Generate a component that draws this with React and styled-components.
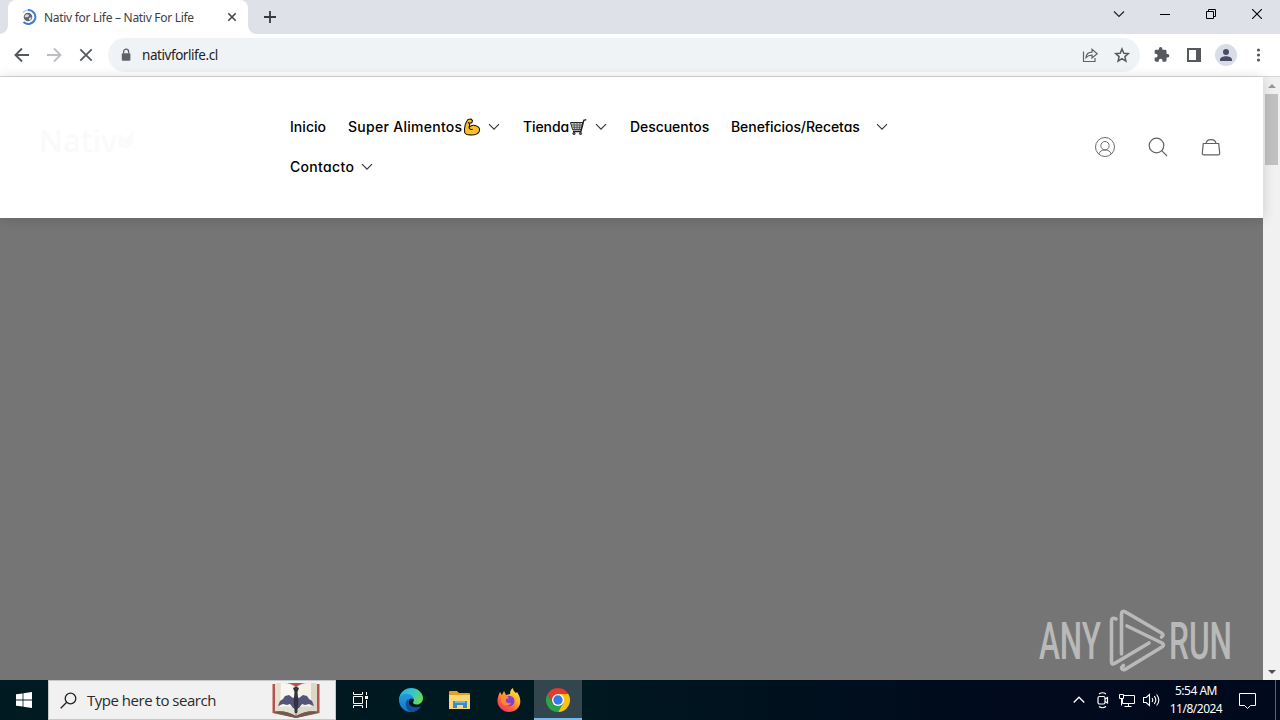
import React from "react";
import styled, { createGlobalStyle } from "styled-components";

const GlobalStyle = createGlobalStyle`
  * {
    box-sizing: border-box;
  }
  body {
    margin: 0;
    overflow: hidden;
    font-family: "Noto Sans", "Open Sans", sans-serif;
  }
  svg {
    display: block;
    flex: none;
  }
`;

const Screen = styled.div`
  display: flex;
  flex-direction: column;
  width: 1280px;
  height: 720px;
  overflow: hidden;
  background: #fff;
`;

/* browser window */
const TabStrip = styled.div`
  display: flex;
  height: 34px;
  flex: none;
  padding-left: 8px;
  background: #dee1e8;
`;
const Tab = styled.div`
  position: relative;
  display: flex;
  align-items: center;
  width: 240px;
  height: 34px;
  padding: 0 10px 0 13px;
  background: #fff;
  border-radius: 8px 8px 0 0;
  &::before,
  &::after {
    content: "";
    position: absolute;
    bottom: 0;
    width: 8px;
    height: 8px;
  }
  &::before {
    left: -8px;
    background: radial-gradient(circle at 0 0, transparent 7.5px, #fff 8px);
  }
  &::after {
    right: -8px;
    background: radial-gradient(circle at 100% 0, transparent 7.5px, #fff 8px);
  }
`;
const TabTitle = styled.span`
  flex: 1;
  margin-left: 7px;
  color: #3c4043;
  font-size: 12px;
  letter-spacing: -0.29px;
  white-space: nowrap;
`;
const NewTab = styled.div`
  display: flex;
  align-items: center;
  margin-left: 16px;
`;
const WindowButtons = styled.div`
  display: flex;
  margin-left: auto;
`;
const WindowButton = styled.div`
  display: flex;
  align-items: center;
  justify-content: center;
  width: 46px;
  height: 28px;
`;
const Toolbar = styled.div`
  display: flex;
  align-items: center;
  height: 43px;
  flex: none;
  padding-left: 12px;
  border-bottom: 1px solid #d5d7da;
`;
const NavIcons = styled.div`
  display: flex;
  gap: 12px;
`;
const AddressBar = styled.div`
  display: flex;
  align-items: center;
  width: 1032px;
  height: 34px;
  margin-left: 12px;
  padding: 0 8px 0 10px;
  background: #f0f3f5;
  border-radius: 17px;
`;
const Url = styled.span`
  flex: 1;
  margin-left: 8px;
  color: #202124;
  font-size: 13.5px;
  letter-spacing: -0.44px;
`;
const AddressActions = styled.div`
  display: flex;
  gap: 12px;
`;
const ToolbarActions = styled.div`
  display: flex;
  gap: 12px;
  margin-left: 12px;
`;
const Avatar = styled.div`
  display: flex;
  width: 22px;
  height: 22px;
  margin: -1px;
  align-items: center;
  justify-content: center;
  border-radius: 50%;
  background: #dadde8;
`;

/* web page */
const Viewport = styled.div`
  display: flex;
  height: 603px;
  flex: none;
`;
const Page = styled.div`
  position: relative;
  width: 1263px;
  background: #757575;
`;
const SiteHeader = styled.header`
  display: flex;
  align-items: center;
  height: 141px;
  padding: 0 41px 2px 39px;
  background: #fff;
  box-shadow: 0 1px 12px rgba(0, 0, 0, 0.16);
`;
const Logo = styled.div`
  display: flex;
  align-items: center;
  width: 251px;
  padding-bottom: 14px;
  color: #fafafa;
  font-size: 31px;
  font-weight: 500;
  letter-spacing: 0;
`;
const Menu = styled.nav`
  display: flex;
  flex-wrap: wrap;
  width: 640px;
  height: 80px;
  font-family: Inter, "Noto Sans", sans-serif;
  font-size: 14px;
  font-weight: 500;
  font-feature-settings: "cv11", "ss03";
  color: #000;
`;
const MenuItem = styled.div`
  display: flex;
  align-items: center;
  width: ${(props) => props.$width}px;
  height: 40px;
  white-space: nowrap;
`;
const MenuLabel = styled.span`
  width: ${(props) => props.$width}px;
  letter-spacing: ${(props) => props.$spacing}px;
`;
const MenuArrow = styled.span`
  margin-left: ${(props) => props.$gap}px;
`;
const HeaderIcons = styled.div`
  display: flex;
  gap: 31px;
  margin-left: auto;
`;
const Scrollbar = styled.div`
  display: flex;
  flex-direction: column;
  align-items: center;
  width: 17px;
  background: #f1f1f1;
`;
const ScrollThumb = styled.div`
  width: 13px;
  height: 71px;
  background: #c1c1c1;
`;
const ScrollButton = styled.div`
  display: flex;
  align-items: center;
  justify-content: center;
  width: 17px;
  height: 17px;
  margin-top: ${(props) => (props.$end ? "auto" : 0)};
`;
const Watermark = styled.div`
  position: absolute;
  right: 25px;
  bottom: 8px;
  display: flex;
  color: #b9b9b9;
`;

/* windows taskbar */
const Taskbar = styled.div`
  display: flex;
  height: 40px;
  flex: none;
  background: linear-gradient(90deg, #001a22 0%, #001820 46%, #000b1c 75%, #000a1c 100%);
`;
const TaskButton = styled.div`
  display: flex;
  align-items: center;
  justify-content: center;
  width: ${(props) => props.$width || 48}px;
  margin-right: ${(props) => props.$gap || 0}px;
  height: 40px;
  background: ${(props) => (props.$active ? "#33464d" : "transparent")};
  box-shadow: ${(props) => (props.$active ? "inset 0 -2px #76b9ed" : "none")};
`;
const SearchBox = styled.div`
  display: flex;
  align-items: center;
  width: 288px;
  height: 40px;
  padding: 0 15px 0 11px;
  background: #f1f1f1;
  border: 1px solid #c4c8ca;
`;
const SearchText = styled.span`
  flex: 1;
  margin-left: 10px;
  color: #2b2b2b;
  font-family: "Open Sans", "Noto Sans", sans-serif;
  font-size: 15px;
  letter-spacing: -0.48px;
`;
const Tray = styled.div`
  display: flex;
  align-items: center;
  margin-left: auto;
  color: #fff;
`;
const TrayIcon = styled.div`
  display: flex;
  justify-content: center;
  width: 24px;
`;
const Clock = styled.div`
  width: 66px;
  font-size: 12px;
  line-height: 18px;
  letter-spacing: -0.5px;
  text-align: center;
`;
const ShowDesktop = styled.div`
  width: 5px;
  height: 40px;
  margin-left: 9px;
  border-left: 1px solid #5a636d;
`;

const ArrowDown = () => (
  <svg width="12" height="8" viewBox="0 0 12 8" fill="none" stroke="#333" strokeWidth="1.100">
    <path d="M1 1.200l5 5 5-5" />
  </svg>
);

const Biceps = () => (
  <svg width="18" height="18" viewBox="0 0 18 18" stroke="#1c1400" strokeWidth="1.100" strokeLinejoin="round">
    <path
      fill="#fdbf2d"
      d="M5 1.500L8 1l1.500 1.600-.6 2-2.100.6-.7 4.600c1-2 4.200-3.400 6.800-2 3.200.7 4.400 3.300 3.300 5.600-1.500 2.700-4.600 3.700-8.400 3.500-3 .1-5.400-.7-6.200-2.500C1.200 9.700 2.500 4.500 5 1.500z"
    />
    <path fill="none" d="M6.200 9.800c.5 1.500 1.900 2 3.500 1.500M4.800 4.600l2 .6" />
  </svg>
);

const Cart = () => (
  <svg width="18" height="18" viewBox="0 0 18 18" fill="none" stroke="#222">
    <path fill="#c9c9c9" d="M1.500 4.500h12.300l-1.700 7.200H3.600z" />
    <path d="M17.300 1.600l-2.500.7-2.900 11.200H4" strokeWidth="1.400" />
    <path d="M3 7h10M3.400 9.300h9M5 4.500l.7 7M8 4.500v7M11 4.500l-.7 7" stroke="#555" strokeWidth=".9" />
    <circle cx="5" cy="15.500" r="1.100" fill="#777" />
    <circle cx="11.500" cy="15.500" r="1.100" fill="#777" />
  </svg>
);

const menu = [
  { label: "Inicio", item: 58, width: 36, spacing: 0.05 },
  { label: "Super Alimentos", item: 175, width: 115, spacing: 0.28, icon: <Biceps />, gap: 7 },
  { label: "Tienda", item: 107, width: 46, spacing: -0.1, icon: <Cart />, gap: 8 },
  { label: "Descuentos", item: 101, width: 79, spacing: -0.05 },
  { label: "Beneficios/Recetas", item: 199, width: 129, spacing: -0.07, gap: 16 },
  { label: "Contacto", item: 120, width: 64, spacing: 0.32, gap: 7 },
];

const BrowserTabs = () => (
  <TabStrip>
    <Tab>
      <svg width="16" height="16" viewBox="0 0 16 16" fill="none">
        <path d="M7 1a7 7 0 1 1-4.500 12" stroke="#3f7dd0" strokeWidth="2" />
        <path d="M2 3.500A7 7 0 0 1 7 1" stroke="#b9cfee" strokeWidth="1.500" />
        <circle cx="7" cy="8" r="4.300" fill="#62676e" />
        <path d="M3.700 7c1-2 3-2.300 4-1.300S7.500 8 6 8.200 4 8.500 3.700 7zM8 9l2.500-1-.6 2.400-2 .9z" fill="#d4d7dc" />
      </svg>
      <TabTitle>Nativ for Life – Nativ For Life</TabTitle>
      <svg width="12" height="12" viewBox="0 0 12 12" stroke="#45484c" strokeWidth="1.600">
        <path d="M2.300 2.300l7.400 7.400M9.700 2.300L2.300 9.700" />
      </svg>
    </Tab>
    <NewTab>
      <svg width="12" height="12" viewBox="0 0 12 12" stroke="#36393d" strokeWidth="1.800">
        <path d="M6 0v12M0 6h12" />
      </svg>
    </NewTab>
    <WindowButtons>
      <WindowButton>
        <svg width="12" height="8" viewBox="0 0 12 8" fill="none" stroke="#222" strokeWidth="1.200">
          <path d="M1 1.500l5 5 5-5" />
        </svg>
      </WindowButton>
      <WindowButton>
        <svg width="10" height="10" viewBox="0 0 10 10" stroke="#000">
          <path d="M0 5.500h10" />
        </svg>
      </WindowButton>
      <WindowButton>
        <svg width="10" height="10" viewBox="0 0 10 10" fill="none" stroke="#000">
          <path d="M.5 2.500h7v7h-7zM2.500 2.500v-2h7v7h-2" />
        </svg>
      </WindowButton>
      <WindowButton>
        <svg width="10" height="10" viewBox="0 0 10 10" stroke="#000" strokeWidth="1.100">
          <path d="M0 0l10 10M10 0L0 10" />
        </svg>
      </WindowButton>
    </WindowButtons>
  </TabStrip>
);

const BrowserToolbar = () => (
  <Toolbar>
    <NavIcons>
      <svg width="20" height="20" viewBox="0 0 20 20" fill="none" stroke="#55595e" strokeWidth="1.900">
        <path d="M17 10H4M10 3.500L3.500 10l6.500 6.500" />
      </svg>
      <svg width="20" height="20" viewBox="0 0 20 20" fill="none" stroke="#bcbec1" strokeWidth="1.900">
        <path d="M3 10h13M10 3.500l6.500 6.500-6.500 6.500" />
      </svg>
      <svg width="20" height="20" viewBox="0 0 20 20" stroke="#55595e" strokeWidth="1.800">
        <path d="M4.300 4.300l11.400 11.400M15.700 4.300L4.300 15.700" />
      </svg>
    </NavIcons>
    <AddressBar>
      <svg width="16" height="16" viewBox="0 0 16 16">
        <rect x="3.800" y="6.300" width="8.600" height="7.400" rx="1" fill="#5f6368" />
        <path d="M5.600 6.500V4.700a2.500 2.500 0 0 1 5 0v1.800" fill="none" stroke="#5f6368" strokeWidth="1.300" />
      </svg>
      <Url>nativforlife.cl</Url>
      <AddressActions>
        <svg width="20" height="20" viewBox="0 0 20 20" fill="none" stroke="#5f6368" strokeWidth="1.200">
          <path d="M3.500 6.500v10h11.500v-3.500M6 12.500c.3-3.800 2.500-5.300 6-5.400V4.300l5.200 4.400-5.200 4.300v-2.800c-2.700 0-4.500.6-6 2.300z" />
        </svg>
        <svg width="20" height="20" viewBox="0 0 20 20" fill="none" stroke="#55595e" strokeWidth="1.500">
          <path d="M10 4l1.800 4.200 4.500.4-3.400 3 1 4.500-3.900-2.400-3.900 2.400 1-4.500-3.400-3 4.500-.4z" />
        </svg>
      </AddressActions>
    </AddressBar>
    <ToolbarActions>
      <svg width="20" height="20" viewBox="0 0 24 24" fill="#55595e">
        <path d="M20.500 11H19V7c0-1.100-.9-2-2-2h-4V3.500a2.500 2.500 0 0 0-5 0V5H4c-1.100 0-2 .9-2 2v3.800h1.500a2.700 2.700 0 0 1 0 5.400H2V20c0 1.100.9 2 2 2h3.800v-1.500a2.700 2.700 0 0 1 5.400 0V22H17c1.100 0 2-.9 2-2v-4h1.500a2.500 2.500 0 0 0 0-5z" transform="translate(1.500 1.500) scale(.84)" />
      </svg>
      <svg width="20" height="20" viewBox="0 0 20 20" fill="#55595e">
        <path fillRule="evenodd" d="M3 3h14v14H3zM5 5v10h7V5z" />
      </svg>
      <Avatar>
        <svg width="14" height="14" viewBox="0 0 14 14" fill="#494d65">
          <circle cx="7" cy="4" r="3" />
          <path d="M1 13v-1.500C1 9.400 4.500 8.200 7 8.200s6 1.200 6 3.300V13z" />
        </svg>
      </Avatar>
      <svg width="20" height="20" viewBox="0 0 20 20" fill="#55595e">
        <circle cx="10.500" cy="5" r="1.600" />
        <circle cx="10.500" cy="10" r="1.600" />
        <circle cx="10.500" cy="15" r="1.600" />
      </svg>
    </ToolbarActions>
  </Toolbar>
);

const AnyRun = () => (
  <Watermark>
    <svg width="200" height="64" viewBox="0 0 200 64" fill="none">
      <g fill="currentColor" fontFamily="Roboto, sans-serif" fontSize="51" fontWeight="500">
        <text x="1" y="51" textLength="62" lengthAdjust="spacingAndGlyphs">
          ANY
        </text>
        <text x="131" y="51" textLength="63" lengthAdjust="spacingAndGlyphs">
          RUN
        </text>
      </g>
      <g stroke="currentColor" strokeWidth="3.600" strokeLinejoin="round" strokeLinecap="round">
        <path d="M78 11q-4.500-2-4.500 2v41q0 3 3 1.500L111 35" />
        <path d="M83.500 46V6q0-4 4-2l36 21q3 2 0 4" />
        <path d="M89 18l35 17q3 2 0 4L87 61.500q-3 1-3.500-2l2-2" />
      </g>
    </svg>
  </Watermark>
);

const WebPage = () => (
  <Viewport>
    <Page>
      <SiteHeader>
        <Logo>
          Nativ
          <svg width="20" height="26" viewBox="0 0 20 26" fill="#fbfbfb">
            <path d="M2 5l6 7 9-9-1 13-7 6-8-3z" />
          </svg>
        </Logo>
        <Menu>
          {menu.map((m) => (
            <MenuItem key={m.label} $width={m.item}>
              <MenuLabel $width={m.width} $spacing={m.spacing}>
                {m.label}
              </MenuLabel>
              {m.icon}
              {m.gap && (
                <MenuArrow $gap={m.gap}>
                  <ArrowDown />
                </MenuArrow>
              )}
            </MenuItem>
          ))}
        </Menu>
        <HeaderIcons>
          <svg width="22" height="22" viewBox="0 0 22 22" fill="none" stroke="#6c6c6c">
            <circle cx="11" cy="11" r="9.500" />
            <circle cx="11" cy="9.700" r="4.200" />
            <path d="M4.800 18c.7-2.500 3-4.100 6.200-4.100s5.500 1.600 6.200 4.100" />
          </svg>
          <svg width="22" height="22" viewBox="0 0 22 22" fill="none" stroke="#606060" strokeWidth="1.200">
            <circle cx="9.500" cy="9.500" r="7.300" />
            <path d="M14.700 14.700l5.300 5.300" />
          </svg>
          <svg width="22" height="22" viewBox="0 0 22 22" fill="none" stroke="#606060" strokeWidth="1.200">
            <path d="M3.300 7.500h15.400l1 9.500q.1 1.800-1.700 1.800H4q-1.800 0-1.700-1.800zM6 7.500c.7-5.200 9.300-5.200 10 0" />
          </svg>
        </HeaderIcons>
      </SiteHeader>
      <AnyRun />
    </Page>
    <Scrollbar>
      <ScrollButton>
        <svg width="8" height="4" viewBox="0 0 8 4" fill="#9a9a9a">
          <path d="M0 4l4-4 4 4z" />
        </svg>
      </ScrollButton>
      <ScrollThumb />
      <ScrollButton $end>
        <svg width="8" height="4" viewBox="0 0 8 4" fill="#505050">
          <path d="M0 0l4 4 4-4z" />
        </svg>
      </ScrollButton>
    </Scrollbar>
  </Viewport>
);

const OpenBook = () => (
  <svg width="48" height="38" viewBox="0 0 48 38">
    <path d="M.5 3H5l2-1h34l2 1h4.500v29L24 37 .5 32z" fill="#b5544c" />
    <path d="M3 2.500Q17 0 24 6v29Q14 29 3 30.500z" fill="#e4e0d2" />
    <path d="M45 2.500Q31 0 24 6v29q10-6 21-4.500z" fill="#dcd8c8" />
    <path d="M9 2q10 0 14 5v20Q16 24 8 26z" fill="#f8f6ee" />
    <path d="M39 2q-10 0-14 5v20q7-3 14-1z" fill="#f4f1e6" />
    <path d="M3 30.500Q14 29 24 35q10-6 21-4.500v1.500l-21 5-21-5z" fill="#6f5c50" />
    <path d="M24 7v28" stroke="#8b8476" strokeWidth="1.200" />
    <path d="M24 15l3 2 4-3 4 1 2 3 3 2 2 5-5-2-4 1-3-1-3 4-3 1-3-1-3-4-3 1-4-1-5 2 2-5 3-2 2-3 4-1 4 3z" fill="#54547c" />
    <path d="M21 7l3-1.500L27 7l-1.500 4 .8 9-1 12h-2.600l-1-12 .8-9z" fill="#33333f" />
  </svg>
);

const EdgeIcon = () => (
  <svg width="26" height="26" viewBox="0 0 26 26">
    <defs>
      <linearGradient id="edgeTop" x1="0" y1="0" x2="1" y2=".5">
        <stop offset="0" stopColor="#28a9e0" />
        <stop offset=".5" stopColor="#35c3d2" />
        <stop offset="1" stopColor="#65d85c" />
      </linearGradient>
      <linearGradient id="edgeBody" x1="0" y1="0" x2="0" y2="1">
        <stop offset="0" stopColor="#239bdc" />
        <stop offset="1" stopColor="#1276ce" />
      </linearGradient>
    </defs>
    <path d="M1 12C2 5 7 1 13 1c7 0 12 5 12 10 0 4-3 6.500-6 6.500-3 0-4.500-1.200-3.800-2.500 1.500-2 .6-5-3.200-5z" fill="url(#edgeTop)" />
    <path d="M1 12c1-4 5-6 9-5 4 .8 6 3 5.500 5.500-2-2-5-.7-5 2.500 0 4.500 6 7.500 12.500 4.500C20.500 23 17 25 13 25 6 25 .5 19 1 12z" fill="url(#edgeBody)" />
    <path d="M10.500 12C6 14 7 23 13 25c4 0 7.500-2 10-5.500-6 2.500-12.500-.2-12.500-4.500z" fill="#124f99" />
  </svg>
);

const FolderIcon = () => (
  <svg width="24" height="20" viewBox="0 0 24 20">
    <path d="M1 2q0-1 1-1h7l2 2h10q1 0 1 1v4H1z" fill="#e6a025" />
    <path d="M1 5h21v14H1z" fill="#f9d777" />
    <path d="M5 18v-6q0-1 1-1h12q1 0 1 1v6h-4v-3H9v3z" fill="#3c8ac8" />
    <path d="M7 11h10v2H7z" fill="#74b7e2" />
  </svg>
);

const FirefoxIcon = () => (
  <svg width="24" height="26" viewBox="0 0 24 26">
    <defs>
      <linearGradient id="fox" x1=".9" y1="0" x2=".2" y2="1">
        <stop offset="0" stopColor="#fff04a" />
        <stop offset=".4" stopColor="#ffb02e" />
        <stop offset=".7" stopColor="#ff603d" />
        <stop offset="1" stopColor="#ef2d70" />
      </linearGradient>
    </defs>
    <path d="M3 5l2 3 2-4 2 4 4-1c0-3 1-5 3-6 0 3 2 4 3 5l1-1c2 3 3.500 6 3.300 10C23 21 18 25 12 25S.5 20 .5 14C.5 11 1.500 8 3 5z" fill="url(#fox)" />
    <circle cx="12.300" cy="14" r="5.300" fill="#8740c8" />
    <path d="M4 9c3-2 6-1 8 2l-3 1c-1 3 2 5 5 4-2 4-9 3-10-2z" fill="#ff8a32" />
  </svg>
);

const ChromeIcon = () => (
  <svg width="26" height="26" viewBox="0 0 26 26">
    <path d="M13 13V7h10.400A12 12 0 0 1 13 25l5.200-9z" fill="#fbc116" />
    <path d="M13 13l5.200 3L13 25A12 12 0 0 1 2.600 7l5.200 9z" fill="#2da14b" />
    <path d="M2.600 7A12 12 0 0 1 23.400 7H13L7.800 16z" fill="#e33b2e" />
    <circle cx="13" cy="13" r="6" fill="#fff" />
    <circle cx="13" cy="13" r="4.700" fill="#3579e8" />
  </svg>
);

const WindowsTaskbar = () => (
  <Taskbar>
    <TaskButton>
      <svg width="16" height="16" viewBox="0 0 16 16" fill="#fff">
        <path d="M0 2.300L6.600 1.400v6.200H0zM7.400 1.200L16 0v7.600H7.400zM0 8.400h6.600v6.200L0 13.700zM7.400 8.400H16V16l-8.600-1.200z" />
      </svg>
    </TaskButton>
    <SearchBox>
      <svg width="17" height="17" viewBox="0 0 17 17" fill="none" stroke="#222" strokeWidth="1.300">
        <circle cx="10.500" cy="6.500" r="5.300" />
        <path d="M6.700 10.300L.7 16.300" />
      </svg>
      <SearchText>Type here to search</SearchText>
      <OpenBook />
    </SearchBox>
    <TaskButton $gap={3}>
      <svg width="17" height="16" viewBox="0 0 17 16" fill="none" stroke="#fff">
        <path d="M1.500 0v2.500h9V0M1.500 16v-2.500h9V16M1.500 4.500h9v7h-9zM14.500 0v3M14.500 8v8" />
        <path d="M13 4h3v3h-3z" fill="#fff" stroke="none" />
      </svg>
    </TaskButton>
    <TaskButton $gap={1}>
      <EdgeIcon />
    </TaskButton>
    <TaskButton $gap={1}>
      <FolderIcon />
    </TaskButton>
    <TaskButton $gap={1}>
      <FirefoxIcon />
    </TaskButton>
    <TaskButton $active>
      <ChromeIcon />
    </TaskButton>
    <Tray>
      <TrayIcon>
        <svg width="12" height="8" viewBox="0 0 12 8" fill="none" stroke="#fff" strokeWidth="1.300">
          <path d="M.7 6.500L6 1.200l5.300 5.300" />
        </svg>
      </TrayIcon>
      <TrayIcon>
        <svg width="14" height="18" viewBox="0 0 14 18" fill="none" stroke="#fff" strokeWidth="1.200">
          <rect x="2" y="5.500" width="7" height="7.500" rx="1.500" />
          <path d="M9 8l2.500-1.500V12L9 10.500M3 3q3.500-2.500 7 0M3 15.500q3.500 2.500 7 0" />
        </svg>
      </TrayIcon>
      <TrayIcon>
        <svg width="16" height="15" viewBox="0 0 16 15" fill="none" stroke="#fff">
          <path d="M5 2.500h10.500v8H3.500V6M.5 1.500h4v4h-4zM2.500 5.500v7M9.500 10.500v3M5.500 13.500h7" />
        </svg>
      </TrayIcon>
      <TrayIcon>
        <svg width="17" height="14" viewBox="0 0 17 14" fill="none" stroke="#fff" strokeWidth="1.100">
          <path d="M.5 4.500h2.700l3.300-3v11l-3.300-3H.5zM9 5q1.500 2 0 4M11.300 3.200q3 3.800 0 7.600M13.600 1.500q4.500 5.500 0 11" />
        </svg>
      </TrayIcon>
      <Clock>
        5:54 AM
        <br />
        11/8/2024
      </Clock>
      <TaskButton $width={37}>
        <svg width="17" height="17" viewBox="0 0 17 17" fill="none" stroke="#fff">
          <path d="M.5 1.500h16v12h-5l-3 3-3-3h-5z" />
        </svg>
      </TaskButton>
      <ShowDesktop />
    </Tray>
  </Taskbar>
);

const App = () => {
  return (
    <Screen>
      <GlobalStyle />
      <BrowserTabs />
      <BrowserToolbar />
      <WebPage />
      <WindowsTaskbar />
    </Screen>
  );
};
export default App;
